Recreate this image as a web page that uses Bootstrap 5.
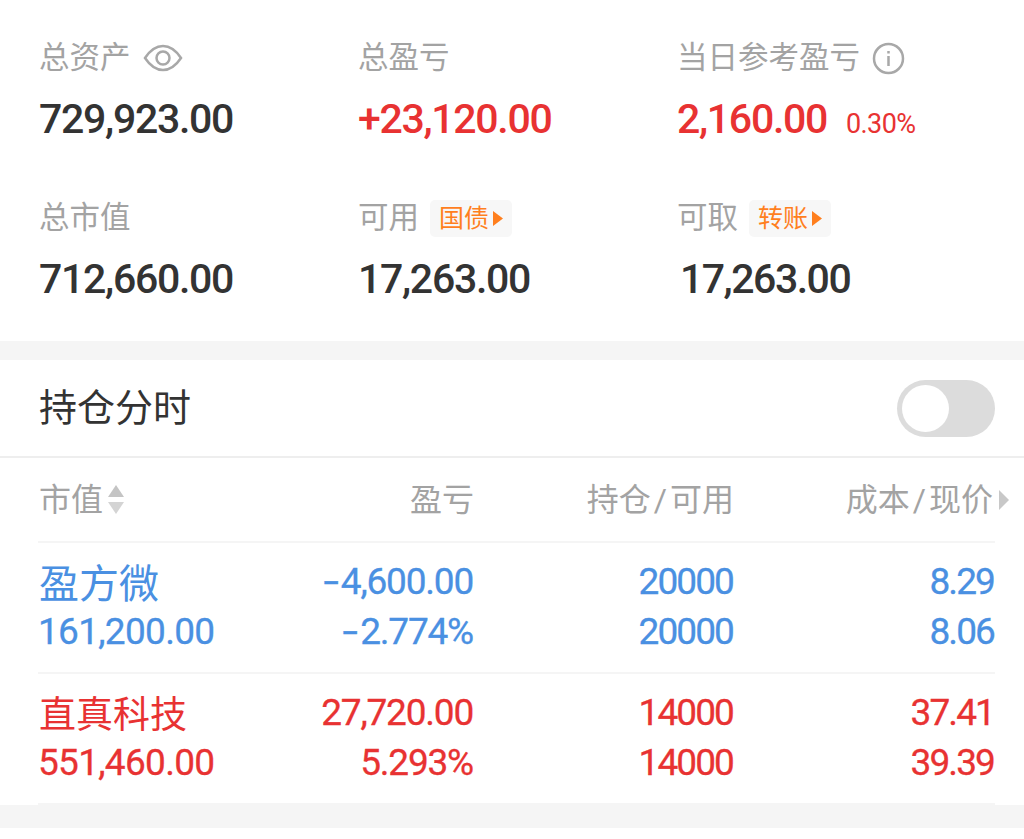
<!DOCTYPE html>
<html lang="zh-CN">
<head>
  <meta charset="UTF-8" />
  <meta name="viewport" content="width=device-width, initial-scale=1.0" />
  <title>持仓</title>
  <link href="https://cdn.jsdelivr.net/npm/bootstrap@5.3.0/dist/css/bootstrap.min.css" rel="stylesheet" />
  <style>
    body {
      background-color: #f5f5f5;
      font-family: "Roboto", "Noto Sans CJK SC", sans-serif;
      color: #333;
      overflow: hidden;
    }
    .summary { background: #fff; height: 341px; padding: 38px 0 0 39px; }
    .sum-row { display: grid; grid-template-columns: 319px 319px 1fr; height: 160px; }
    .sum-label { font-size: 30.5px; line-height: 40px; color: #a3a3a3; height: 40px; }
    .label-icon { margin-left: 12px; }
    .sum-num { font-size: 41px; line-height: 48px; font-weight: 500; margin-top: 17px; color: #333; letter-spacing: -1.3px; }
    .sum-pct { font-size: 27px; font-weight: 400; margin-left: 19px; letter-spacing: -.6px; }
    .last-col { padding-left: 3px; letter-spacing: -1.5px; }
    .up { color: #e83232 !important; }
    .down { color: #4a90e2; }
    .tag-link { background: #f7f7f7; color: #ff7f1e; font-size: 25px; line-height: 37px; height: 37px; border-radius: 5px; padding: 0 9px; margin-left: 11px; }
    .holdings { background: #fff; margin-top: 19px; height: 445px; }
    .hold-head { height: 98px; padding: 0 29px 0 39px; border-bottom: 2px solid #eee; }
    .hold-title { font-size: 38px; color: #333; }
    .switch-off { width: 98px; height: 57px; border-radius: 29px; background: #dcdcdc; padding: 5px; }
    .switch-knob { width: 47px; height: 47px; border-radius: 50%; background: #fff; }
    .hold-table { padding: 0 29px 0 38px; }
    .hold-row { display: grid; grid-template-columns: 1fr 200px 260px 261px; border-bottom: 2px solid #f5f5f5; }
    .hold-cols { height: 85px; font-size: 32px; color: #a3a3a3; }
    .first-col { padding-left: 1px; }
    .stock-row { height: 131px; font-size: 37px; font-weight: 400; line-height: 50px; padding-top: 14px; letter-spacing: -1.2px; -webkit-text-stroke: .3px currentColor; }
    .name-col { letter-spacing: -.7px; }
    .gain-col { padding-right: 1px; }
    .tight-col { letter-spacing: -1.9px; padding-right: 1px; }
    .stock-name { font-size: 37px; letter-spacing: 0; padding: 5px 0 0 1px; line-height: 45px; -webkit-text-stroke: 0; }
    .stock-name-lg { font-size: 40px; }
    .neg-mark { display: inline-block; width: 18px; text-align: right; transform: scaleX(1.5); transform-origin: right center; margin-right: 4px; }
    .slash-tight { font-family: "Roboto", sans-serif; margin: 0 3px; }
    .price-head { margin-right: 2px; }
    .foot-strip { background: #fff; height: 11px; margin-top: 23px; }
  </style>
</head>
<body>
  <div class="summary">
    <div class="sum-row">
      <div>
        <div class="sum-label d-flex align-items-center">总资产
          <svg class="label-icon" width="40" height="28" viewBox="0 0 40 28" fill="none" stroke="#a8a8a8" stroke-width="2.5"><path d="M2 14C8 5 14 2 20 2s12 3 18 12c-6 9-12 12-18 12S8 23 2 14z"/><circle cx="20" cy="14" r="6.5"/></svg>
        </div>
        <div class="sum-num">729,923.00</div>
      </div>
      <div>
        <div class="sum-label">总盈亏</div>
        <div class="sum-num up">+23,120.00</div>
      </div>
      <div>
        <div class="sum-label d-flex align-items-center">当日参考盈亏
          <svg class="label-icon" width="33" height="33" viewBox="0 0 33 33" fill="none" stroke="#a8a8a8" stroke-width="2.5"><circle cx="16.500" cy="16.500" r="14.500"/><path d="M16.500 14v10M16.500 9v2.500"/></svg>
        </div>
        <div class="sum-num up">2,160.00<span class="sum-pct">0.30%</span></div>
      </div>
    </div>
    <div class="sum-row">
      <div>
        <div class="sum-label">总市值</div>
        <div class="sum-num">712,660.00</div>
      </div>
      <div>
        <div class="sum-label d-flex align-items-center">可用
          <span class="tag-link d-flex align-items-center">国债<svg class="ms-1" width="10" height="15" viewBox="0 0 10 15"><path d="M0 0l10 7.500L0 15z" fill="#ff7f1e"/></svg></span>
        </div>
        <div class="sum-num">17,263.00</div>
      </div>
      <div>
        <div class="sum-label d-flex align-items-center">可取
          <span class="tag-link d-flex align-items-center">转账<svg class="ms-1" width="10" height="15" viewBox="0 0 10 15"><path d="M0 0l10 7.500L0 15z" fill="#ff7f1e"/></svg></span>
        </div>
        <div class="sum-num last-col">17,263.00</div>
      </div>
    </div>
  </div>

  <div class="holdings">
    <div class="hold-head d-flex align-items-center justify-content-between">
      <span class="hold-title">持仓分时</span>
      <div class="switch-off"><div class="switch-knob"></div></div>
    </div>
    <div class="hold-table">
      <div class="hold-row hold-cols align-items-center">
        <div class="d-flex align-items-center first-col">市值
          <svg class="ms-1" width="18" height="30" viewBox="0 0 18 30"><path d="M9 0l8 12H1z" fill="#c4c4c4"/><path d="M1 17h16L9 29z" fill="#d4d4d4"/></svg>
        </div>
        <div class="text-end">盈亏</div>
        <div class="text-end text-nowrap">持仓<span class="slash-tight">/</span>可用</div>
        <div class="text-end text-nowrap position-relative"><span class="d-inline-block price-head">成本<span class="slash-tight">/</span>现价</span>
          <svg class="position-absolute top-50 start-100 translate-middle-y ms-1" width="10" height="20" viewBox="0 0 10 20"><path d="M0 0l10 10L0 20z" fill="#c8c8c8"/></svg>
        </div>
      </div>
      <div class="hold-row stock-row down">
        <div class="name-col"><div class="stock-name stock-name-lg">盈方微</div><div>161,200.00</div></div>
        <div class="text-end gain-col"><div><span class="neg-mark">-</span>4,600.00</div><div><span class="neg-mark">-</span>2.774%</div></div>
        <div class="text-end tight-col"><div>20000</div><div>20000</div></div>
        <div class="text-end tight-col"><div>8.29</div><div>8.06</div></div>
      </div>
      <div class="hold-row stock-row up">
        <div class="name-col"><div class="stock-name">直真科技</div><div>551,460.00</div></div>
        <div class="text-end gain-col"><div>27,720.00</div><div>5.293%</div></div>
        <div class="text-end tight-col"><div>14000</div><div>14000</div></div>
        <div class="text-end tight-col"><div>37.41</div><div>39.39</div></div>
      </div>
    </div>
  </div>
  <div class="foot-strip"></div>
  <script src="https://cdn.jsdelivr.net/npm/bootstrap@5.3.0/dist/js/bootstrap.bundle.min.js"></script>
</body>
</html>
